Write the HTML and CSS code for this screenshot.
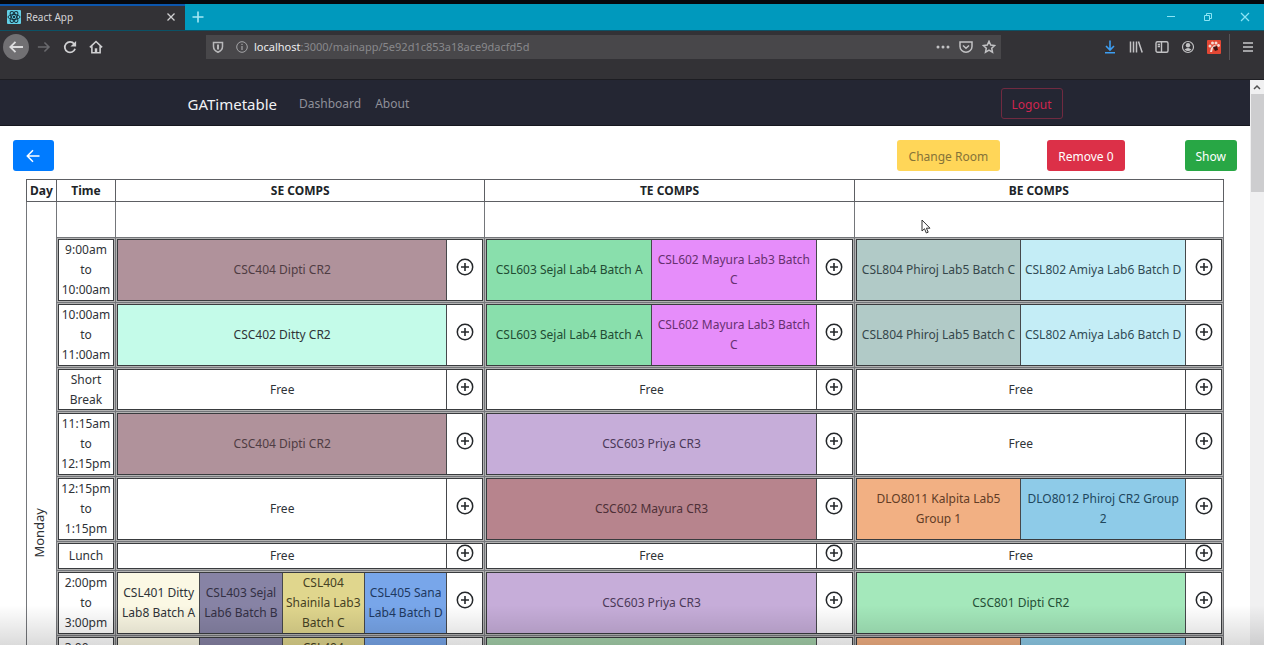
FILE: index.html
```html
<!DOCTYPE html>
<html lang="en">
<head>
<meta charset="utf-8">
<title>React App</title>
<link rel="stylesheet" href="styles.css">
</head>
<body>
<svg class="sprite" aria-hidden="true">
  <symbol id="plus" viewBox="0 0 18 18"><circle cx="9" cy="9" r="7.7" fill="none" stroke="currentColor" stroke-width="1.5"/><path d="M9 5v8M5 9h8" stroke="currentColor" stroke-width="1.6"/></symbol>
</svg>
<div class="window">
  <header class="chrome">
    <div class="tabs">
      <div class="tab">
        <svg class="favicon" viewBox="0 0 14 14"><rect width="14" height="14" rx="1" fill="#62cfe6"/><g fill="none" stroke="#17333e" stroke-width="1"><ellipse cx="7" cy="7" rx="6" ry="2.5"/><ellipse cx="7" cy="7" rx="6" ry="2.5" transform="rotate(60 7 7)"/><ellipse cx="7" cy="7" rx="6" ry="2.5" transform="rotate(120 7 7)"/></g><circle cx="7" cy="7" r="1.2" fill="#17333e"/></svg>
        <span class="tab-title">React App</span>
        <button class="bare" aria-label="Close tab"><svg width="10" height="10" viewBox="0 0 10 10"><path d="M1.5 1.5l7 7M8.500 1.500l-7 7" stroke="#d0d0d2" stroke-width="1.300"/></svg></button>
      </div>
      <button class="bare new-tab" aria-label="New tab"><svg width="12" height="12" viewBox="0 0 12 12"><path d="M6 .5v11M.5 6h11" stroke="#a5e8f5" stroke-width="1.600"/></svg></button>
      <div class="controls">
        <button class="bare" aria-label="Minimize"><svg width="10" height="10" viewBox="0 0 10 10"><path d="M1 4.500h8" stroke="#8be4f5"/></svg></button>
        <button class="bare" aria-label="Restore"><svg width="10" height="10" viewBox="0 0 10 10"><path d="M1.500 3.500h5v5h-5zM3.500 3.500v-2h5v5h-2" fill="none" stroke="#8be4f5"/></svg></button>
        <button class="bare" aria-label="Close"><svg width="10" height="10" viewBox="0 0 10 10"><path d="M1 1l8 8M9 1l-8 8" stroke="#8be4f5" stroke-width="1.200"/></svg></button>
      </div>
    </div>
    <div class="toolbar">
      <div class="nav-buttons">
        <button class="bare back" aria-label="Back"><svg width="16" height="16" viewBox="0 0 16 16" fill="none" stroke="#dcdcde" stroke-width="1.800"><path d="M15 8H2.500M7.500 2.800L2.300 8l5.200 5.200"/></svg></button>
        <button class="bare" aria-label="Forward"><svg width="14" height="14" viewBox="0 0 16 16" fill="none" stroke="#69696d" stroke-width="1.800"><path d="M1 8h12.500M8.500 2.800L13.700 8l-5.200 5.200"/></svg></button>
        <button class="bare" aria-label="Reload"><svg width="14" height="14" viewBox="0 0 16 16" fill="none" stroke="#d0d0d2" stroke-width="2"><path d="M12.800 4.500A6 6 0 1 0 13.800 10"/><path d="M15 1v6.500H8.500z" fill="#d0d0d2" stroke="none"/></svg></button>
        <button class="bare" aria-label="Home"><svg width="14" height="14" viewBox="0 0 16 16" fill="none" stroke="#d0d0d2" stroke-width="1.800"><path d="M1 8.500L8 1.700l7 6.800M3.300 7v7.500h9.400V7"/><path d="M8 14V9.500" stroke-width="2.800"/></svg></button>
      </div>
      <div class="address">
        <svg width="12" height="12" viewBox="0 0 12 12"><path d="M1.500 1.500h9v4c0 3-2 4.700-4.500 5.800C3.500 10.200 1.500 8.500 1.500 5.500z" fill="none" stroke="#b8b8ba" stroke-width="1.500"/><path d="M6 3.500v5" stroke="#b8b8ba" stroke-width="2"/></svg>
        <svg width="12" height="12" viewBox="0 0 12 12"><circle cx="6" cy="6" r="5.300" fill="none" stroke="#a5a5a8"/><path d="M6 5v4M6 2.700v1.300" stroke="#a5a5a8" stroke-width="1.200"/></svg>
        <span class="url"><b>localhost</b>:3000/mainapp/5e92d1c853a18ace9dacfd5d</span>
        <svg width="14" height="14" viewBox="0 0 14 14" fill="#c2c2c4"><circle cx="2" cy="7" r="1.500"/><circle cx="7" cy="7" r="1.500"/><circle cx="12" cy="7" r="1.500"/></svg>
        <svg width="14" height="14" viewBox="0 0 14 14" fill="none" stroke="#c2c2c4" stroke-width="1.500"><path d="M1 2h12v4.500a6 5.700 0 0 1-12 0zM4 5.500l3 2.800 3-2.800"/></svg>
        <svg width="14" height="14" viewBox="0 0 14 14" fill="none" stroke="#c2c2c4" stroke-width="1.500"><path d="M7 1.300l1.700 3.700 4 .5-3 2.700.8 4L7 10.200l-3.500 2 .8-4-3-2.700 4-.5z"/></svg>
      </div>
      <div class="tools">
        <svg width="14" height="14" viewBox="0 0 14 14" fill="none" stroke="#3d9ef2" stroke-width="1.600"><path d="M7 .5v9M3 6l4 4 4-4M2 12.800h10"/></svg>
        <svg width="14" height="14" viewBox="0 0 14 14" fill="none" stroke="#c2c2c4" stroke-width="1.500"><path d="M1.500 1.500v11M4.500 1.500v11M7.500 1.500v11M9.500 1.500l3.700 11"/></svg>
        <svg width="14" height="14" viewBox="0 0 14 14" fill="none" stroke="#c2c2c4" stroke-width="1.400"><rect x="1" y="1.700" width="12" height="10.600" rx="1.500"/><path d="M6.500 2v10M2.700 4.500H5M2.700 6.500H5"/></svg>
        <svg width="14" height="14" viewBox="0 0 14 14"><circle cx="7" cy="7" r="5.500" fill="none" stroke="#c2c2c4" stroke-width="1.200"/><circle cx="7" cy="5.300" r="2.200" fill="#c2c2c4"/><path d="M3.500 9.500q3.500-3 7 0Q7 12.500 3.500 9.500" fill="#c2c2c4"/></svg>
        <svg width="14" height="14" viewBox="0 0 14 14"><rect width="14" height="14" rx="1" fill="#e24734"/><g fill="#f5d9d3"><circle cx="3" cy="6" r="1.500"/><circle cx="5.500" cy="3" r="1.500"/><circle cx="9" cy="3" r="1.500"/><circle cx="11.500" cy="5.500" r="1.400"/><path d="M3 12l1-4 3-3 3 1-4 2-1 4z"/></g><path d="M6 7l4-1 1 4-3 1z" fill="#3b1716"/></svg>
        <span class="divider"></span>
        <svg width="12" height="14" viewBox="0 0 12 14"><path d="M1 3h10M1 7h10M1 11h10" stroke="#c8c8ca" stroke-width="1.600"/></svg>
      </div>
    </div>
  </header>

  <div class="viewport">
    <div class="page">
      <nav class="navbar">
        <a class="brand" href="#">GATimetable</a>
        <a class="nav-link" href="#">Dashboard</a>
        <a class="nav-link" href="#">About</a>
        <button class="btn logout">Logout</button>
      </nav>
      <main>
        <div class="actions">
          <button class="btn primary" aria-label="Back to list"><svg width="14" height="14" viewBox="0 0 14 14" fill="none" stroke="#fff" stroke-width="1.500"><path d="M13.500 7H1.500M7 1.300L1.300 7 7 12.700"/></svg></button>
          <button class="btn warning">Change Room</button>
          <button class="btn danger">Remove 0</button>
          <button class="btn success">Show</button>
        </div>
        <table class="timetable">
          <colgroup><col class="col-day"><col class="col-time"><col><col><col></colgroup>
          <thead>
            <tr><th>Day</th><th>Time</th><th>SE COMPS</th><th>TE COMPS</th><th>BE COMPS</th></tr>
          </thead>
          <tbody>
            <tr class="spacer"><th class="day" rowspan="9" scope="rowgroup"><span>Monday</span></th><td></td><td></td><td></td><td></td></tr>
            <tr class="h3">
              <td><div class="slot time">9:00am<br>to<br>10:00am</div></td>
              <td><div class="slot"><div class="c mauve">CSC404 Dipti CR2</div><button class="add" aria-label="Add"><svg><use href="#plus"/></svg></button></div></td>
              <td><div class="slot"><div class="c green">CSL603 Sejal Lab4 Batch A</div><div class="c violet">CSL602 Mayura Lab3 Batch<br>C</div><button class="add" aria-label="Add"><svg><use href="#plus"/></svg></button></div></td>
              <td><div class="slot"><div class="c sage">CSL804 Phiroj Lab5 Batch C</div><div class="c ice">CSL802 Amiya Lab6 Batch D</div><button class="add" aria-label="Add"><svg><use href="#plus"/></svg></button></div></td>
            </tr>
            <tr class="h3">
              <td><div class="slot time">10:00am<br>to<br>11:00am</div></td>
              <td><div class="slot"><div class="c mint">CSC402 Ditty CR2</div><button class="add" aria-label="Add"><svg><use href="#plus"/></svg></button></div></td>
              <td><div class="slot"><div class="c green">CSL603 Sejal Lab4 Batch A</div><div class="c violet">CSL602 Mayura Lab3 Batch<br>C</div><button class="add" aria-label="Add"><svg><use href="#plus"/></svg></button></div></td>
              <td><div class="slot"><div class="c sage">CSL804 Phiroj Lab5 Batch C</div><div class="c ice">CSL802 Amiya Lab6 Batch D</div><button class="add" aria-label="Add"><svg><use href="#plus"/></svg></button></div></td>
            </tr>
            <tr class="h2">
              <td><div class="slot time">Short<br>Break</div></td>
              <td><div class="slot"><div class="c">Free</div><button class="add" aria-label="Add"><svg><use href="#plus"/></svg></button></div></td>
              <td><div class="slot"><div class="c">Free</div><button class="add" aria-label="Add"><svg><use href="#plus"/></svg></button></div></td>
              <td><div class="slot"><div class="c">Free</div><button class="add" aria-label="Add"><svg><use href="#plus"/></svg></button></div></td>
            </tr>
            <tr class="h3">
              <td><div class="slot time">11:15am<br>to<br>12:15pm</div></td>
              <td><div class="slot"><div class="c mauve">CSC404 Dipti CR2</div><button class="add" aria-label="Add"><svg><use href="#plus"/></svg></button></div></td>
              <td><div class="slot"><div class="c lilac">CSC603 Priya CR3</div><button class="add" aria-label="Add"><svg><use href="#plus"/></svg></button></div></td>
              <td><div class="slot"><div class="c">Free</div><button class="add" aria-label="Add"><svg><use href="#plus"/></svg></button></div></td>
            </tr>
            <tr class="h3">
              <td><div class="slot time">12:15pm<br>to<br>1:15pm</div></td>
              <td><div class="slot"><div class="c">Free</div><button class="add" aria-label="Add"><svg><use href="#plus"/></svg></button></div></td>
              <td><div class="slot"><div class="c rose">CSC602 Mayura CR3</div><button class="add" aria-label="Add"><svg><use href="#plus"/></svg></button></div></td>
              <td><div class="slot"><div class="c orange">DLO8011 Kalpita Lab5<br>Group 1</div><div class="c sky">DLO8012 Phiroj CR2 Group<br>2</div><button class="add" aria-label="Add"><svg><use href="#plus"/></svg></button></div></td>
            </tr>
            <tr class="h1">
              <td><div class="slot time">Lunch</div></td>
              <td><div class="slot"><div class="c">Free</div><button class="add" aria-label="Add"><svg><use href="#plus"/></svg></button></div></td>
              <td><div class="slot"><div class="c">Free</div><button class="add" aria-label="Add"><svg><use href="#plus"/></svg></button></div></td>
              <td><div class="slot"><div class="c">Free</div><button class="add" aria-label="Add"><svg><use href="#plus"/></svg></button></div></td>
            </tr>
            <tr class="h3">
              <td><div class="slot time">2:00pm<br>to<br>3:00pm</div></td>
              <td><div class="slot"><div class="c cream">CSL401 Ditty<br>Lab8 Batch A</div><div class="c slate">CSL403 Sejal<br>Lab6 Batch B</div><div class="c khaki">CSL404<br>Shainila Lab3<br>Batch C</div><div class="c blue">CSL405 Sana<br>Lab4 Batch D</div><button class="add" aria-label="Add"><svg><use href="#plus"/></svg></button></div></td>
              <td><div class="slot"><div class="c lilac">CSC603 Priya CR3</div><button class="add" aria-label="Add"><svg><use href="#plus"/></svg></button></div></td>
              <td><div class="slot"><div class="c spring">CSC801 Dipti CR2</div><button class="add" aria-label="Add"><svg><use href="#plus"/></svg></button></div></td>
            </tr>
            <tr class="h3">
              <td><div class="slot time">3:00pm</div></td>
              <td><div class="slot"><div class="c cream"></div><div class="c slate"></div><div class="c khaki">CSL404<br>Shainila Lab3<br>Batch C</div><div class="c blue"></div><button class="add" aria-label="Add"></button></div></td>
              <td><div class="slot"><div class="c leaf"></div><button class="add" aria-label="Add"></button></div></td>
              <td><div class="slot"><div class="c orange"></div><div class="c sky"></div><button class="add" aria-label="Add"></button></div></td>
            </tr>
          </tbody>
        </table>
      </main>
    </div>
    <div class="scrollbar">
      <svg width="8" height="14" viewBox="0 0 8 14"><path d="M1 9l3-3 3 3" fill="none" stroke="#505050" stroke-width="1.500"/></svg>
      <div class="thumb"></div>
    </div>
  </div>
  <div class="shade"></div>
  <svg class="cursor" width="10" height="15" viewBox="0 0 10 15"><path d="M1 1v11l2.500-2.300L5.300 14l1.900-.8-1.800-4H9z" fill="#fff" stroke="#333"/></svg>
</div>
</body>
</html>
```

FILE: styles.css
```css
* { box-sizing: border-box; }
body {
  margin: 0;
  font: 12px/20px "Noto Sans", "Open Sans", sans-serif;
  color: #2f3337;
  background: #fff;
}
button { font: inherit; cursor: pointer; }
svg { display: block; flex: none; }
.sprite { position: absolute; width: 0; height: 0; }
.bare {
  display: flex;
  align-items: center;
  justify-content: center;
  padding: 0;
  border: 0;
  background: none;
}
.window {
  position: relative;
  display: flex;
  flex-direction: column;
  height: 100vh;
  overflow: hidden;
}

/* Browser frame */
.chrome { flex: none; background: #333236; border-top: 4px solid #05080d; }
.tabs { display: flex; height: 26px; background: #0099bd; }
.tab {
  display: flex;
  align-items: center;
  gap: 5px;
  width: 185px;
  padding: 0 9px 2px 7px;
  border-top: 2px solid #0b56ae;
  background: #333236;
}
.favicon { width: 14px; height: 14px; }
.tab-title { flex: 1; font-size: 10px; color: #d4d4d6; }
.new-tab { width: 26px; }
.controls { display: flex; align-items: center; gap: 27px; margin-left: auto; padding-right: 14px; }
.toolbar {
  display: flex;
  align-items: flex-start;
  height: 50px;
  padding: 4px 10px 0 3px;
  border-top: 1px solid #0b5266;
  border-bottom: 1px solid #1d1d22;
}
.nav-buttons { display: flex; align-items: center; gap: 12px; width: 203px; height: 24px; }
.nav-buttons .back { width: 26px; height: 26px; margin-right: -4px; border-radius: 50%; background: #717073; }
.address {
  display: flex;
  align-items: center;
  gap: 9px;
  flex: 1;
  height: 24px;
  padding: 0 5px 0 6px;
  background: #48474a;
}
.address svg:first-child { margin-right: 3px; }
.url { flex: 1; margin-left: -3px; font-size: 11px; color: #89898c; }
.url b { font-weight: 400; color: #ececee; }
.tools { display: flex; align-items: center; gap: 12px; height: 24px; padding-left: 102px; }
.divider { width: 1px; height: 26px; margin: 0 0 0 -4px; background: #555458; }

/* Application */
.viewport { display: flex; flex: 1; min-height: 0; }
.page { flex: 1; min-width: 0; overflow: hidden; }
.navbar {
  display: flex;
  align-items: center;
  gap: 14px;
  height: 46px;
  padding: 2px 15% 0;
  background: #242633;
  border-bottom: 1px solid #16171f;
}
.navbar a { text-decoration: none; }
.brand { margin-right: 8px; font-size: 15px; color: #f2f2f5; }
.nav-link { color: #8f9099; }
.btn {
  height: 31px;
  padding: 2px 10px 0;
  border: 1px solid transparent;
  border-radius: 3px;
  color: #fff;
}
.logout { margin-left: auto; border-color: #702a40; background: none; color: #cf2550; }
.actions { display: flex; align-items: center; gap: 47px; padding: 14px 13px 8px; }
.primary { width: 41px; padding: 0 12px; background: #007bff; }
.warning { margin-left: auto; padding: 2px 11px 0; background: #ffd658; color: #857339; }
.danger { margin-right: 13px; background: #dc3048; }
.success { background: #28a745; }

.timetable {
  width: calc(100% - 52px);
  margin-left: 26px;
  border-collapse: collapse;
  table-layout: fixed;
}
.col-day { width: 30px; }
.col-time { width: 59px; }
.timetable th, .timetable td { padding: 0; border: 1px solid #74767a; }
.timetable thead th { height: 22px; color: #202428; border-color: #5d5f63; }
.spacer td { height: 36px; }
.timetable tr:not(.spacer) td { padding: 1px; background: #b2b2b2; }
.timetable .day { padding: 0 6px 136px 0; vertical-align: bottom; font-weight: 400; }
.day span { display: inline-block; writing-mode: vertical-rl; transform: rotate(180deg); font-size: 13px; }
.slot {
  display: flex;
  border: 1px solid #393b3e;
  background: #fff;
  text-align: center;
  white-space: nowrap;
}
.h3 .slot { height: 62px; }
.h2 .slot { height: 41px; }
.h1 .slot { height: 26px; }
.time { display: block; }
.h1 .time { padding-top: 2px; }
.c {
  display: flex;
  flex: 1 1 0;
  align-items: center;
  justify-content: center;
  min-width: 0;
  border-right: 1px solid #46484b;
}
.add {
  display: flex;
  align-items: center;
  justify-content: center;
  width: 35px;
  padding: 0 0 6px;
  border: 0;
  background: none;
  color: #25282b;
}
.add svg { width: 18px; height: 18px; }

.mauve { background: #b0929b; color: #4f3c43; }
.mint { background: #c4fbe9; }
.green { background: #89dfac; color: #214c33; }
.violet { background: #e68dfa; color: #673070; }
.sage { background: #b1cac7; color: #35464a; }
.ice { background: #c4edf6; color: #304b55; }
.lilac { background: #c6add9; color: #4b3958; }
.rose { background: #b7848d; color: #4e3037; }
.orange { background: #f2b083; color: #623c25; }
.sky { background: #8ecbe8; color: #20475d; }
.cream { background: #fbf8e4; }
.slate { background: #8783a5; color: #333044; }
.khaki { background: #e0d68d; color: #464123; }
.blue { background: #78a6ea; color: #1e3961; }
.spring { background: #a4e8bb; color: #245037; }
.leaf { background: #a4cfaa; }

.scrollbar {
  display: flex;
  flex-direction: column;
  align-items: center;
  width: 14px;
  background: #f0f0f1;
}
.thumb { align-self: stretch; height: 98px; margin: 0 0 0 1px; background: #cdcdcf; }
.shade {
  position: absolute;
  inset: auto 0 0;
  height: 40px;
  background: linear-gradient(transparent, rgba(0, 0, 0, .14));
  pointer-events: none;
}
.cursor { position: absolute; left: 921px; top: 219px; }
```
